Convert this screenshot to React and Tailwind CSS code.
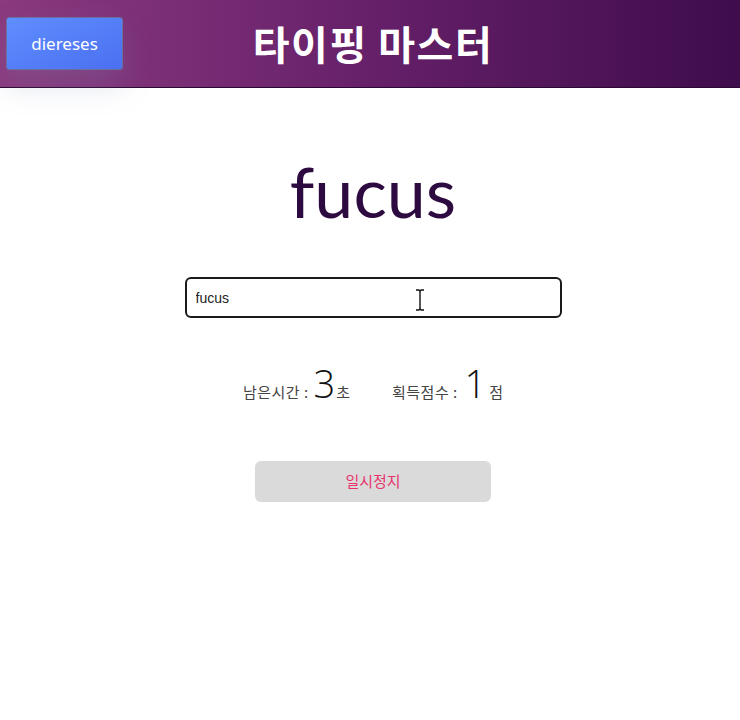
import { useState } from "react";

const KR = "font-['Noto_Sans_CJK_KR','Noto_Sans',sans-serif]";

export default function App() {
  const [value, setValue] = useState("fucus");
  const word = "fucus";
  const timeLeft = 3;
  const score = 1;

  return (
    <div className={`min-h-[720px] bg-white ${KR}`}>
      <header className="relative h-[88px] pl-[6px] border-b border-[#2a0833] bg-gradient-to-r from-[#8b3a7f] via-[#662069] to-[#3f0c4c] flex items-center justify-center">
        <button className="absolute left-[6px] top-[17px] w-[117px] h-[53px] rounded-[3px] border border-[#6b6fa0] bg-gradient-to-br from-[#5f8eff] to-[#4b6ff0] text-white text-[17px] font-['Noto_Sans',sans-serif] shadow-[0_14px_30px_rgba(120,130,170,0.25)]">
          diereses
        </button>
        <h1 className="text-white text-[40px] font-bold tracking-[1.5px] leading-none -mt-[2px]">타이핑 마스터</h1>
      </header>

      <main className="flex flex-col items-center pl-[6px]">
        <p className="mt-[68px] text-[#2d0a3f] text-[70px] leading-none font-['Lato',sans-serif] font-normal">{word}</p>

        <div className="relative mt-[51px]">
          <input
            value={value}
            onChange={(e) => setValue(e.target.value)}
            className="w-[377px] h-[41px] rounded-[6px] border-2 border-[#1a1a1a] px-[9px] text-[14px] text-[#222] font-['Liberation_Sans',sans-serif] outline-none"
          />
          <svg className="absolute left-[230px] top-[12px]" width="10" height="22" viewBox="0 0 10 22">
            <path d="M1 1 H3.5 Q5 1 5 3 V19 Q5 21 3.5 21 H1 M9 1 H6.5 Q5 1 5 3 M5 19 Q5 21 6.5 21 H9" fill="none" stroke="#111" strokeWidth="1.4" />
          </svg>
        </div>

        <div className="mt-[46px] flex items-baseline gap-[42px] text-[#444]">
          <div className="flex items-baseline">
            <span className="text-[15px] tracking-[0.5px]">남은시간 :&nbsp;</span>
            <span className="text-[38px] leading-none font-['Open_Sans',sans-serif] font-light text-[#111] mx-[1px]">{timeLeft}</span>
            <span className="text-[15px]">초</span>
          </div>
          <div className="flex items-baseline">
            <span className="text-[15px] tracking-[0.5px]">획득점수 :&nbsp;</span>
            <span className="text-[38px] leading-none font-['Open_Sans',sans-serif] font-light text-[#111] mx-[3px]">{score}</span>
            <span className="text-[15px]">점</span>
          </div>
        </div>

        <button className="mt-[57px] w-[236px] h-[41px] rounded-[6px] bg-[#dadada] text-[#e8336b] text-[15px]">
          일시정지
        </button>
      </main>
    </div>
  );
}
